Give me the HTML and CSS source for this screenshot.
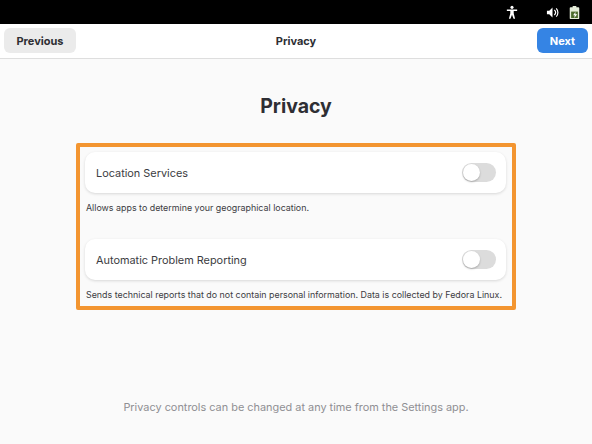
FILE: index.html
```html
<!DOCTYPE html>
<html lang="en">
<head>
<meta charset="utf-8">
<title>Privacy</title>
<link rel="stylesheet" href="styles.css">
</head>
<body>
<div class="topbar">
  <svg class="ic ic-a11y" viewBox="0 0 14 16"><circle cx="7" cy="2" r="1.8" fill="#fff"/><path d="M1 4.600h12v1.600H9v3l1.600 6.200H8.800L7 10.600 5.200 15.400H3.400L5 9.200v-3H1z" fill="#fff"/></svg>
  <svg class="ic ic-vol" viewBox="0 0 14 14"><path d="M1 5h2.500L7 1.500v11L3.500 9H1z" fill="#fff"/><path d="M9 4.200a4 4 0 0 1 0 5.600M11 2.500a6.500 6.500 0 0 1 0 9" fill="none" stroke="#fff" stroke-width="1.300"/></svg>
  <svg class="ic ic-bat" viewBox="0 0 12 16"><path d="M4 .8h4v1.400h2.200c.6 0 1 .4 1 1v11c0 .6-.4 1-1 1H1.800c-.6 0-1-.4-1-1v-11c0-.6.4-1 1-1H4z" fill="#e4ecd8"/><path d="M2.300 7h7.400v7H2.300z" fill="#4c6b2c"/><path d="M7 7.500 4.500 11h1.800l-.6 3L9 10H7z" fill="#fff"/></svg>
</div>
<header class="header">
  <div class="header-start"><button class="btn btn-prev">Previous</button></div>
  <div class="header-title">Privacy</div>
  <div class="header-end"><button class="btn btn-next">Next</button></div>
</header>
<main class="main">
  <h1 class="title">Privacy</h1>
  <section class="box">
    <div class="row">
      <span class="row-label">Location Services</span>
      <span class="switch"><span class="knob"></span></span>
    </div>
    <p class="note">Allows apps to determine your geographical location.</p>
    <div class="row row-second">
      <span class="row-label">Automatic Problem Reporting</span>
      <span class="switch"><span class="knob"></span></span>
    </div>
    <p class="note">Sends technical reports that do not contain personal information. Data is collected by Fedora Linux.</p>
  </section>
  <p class="footer">Privacy controls can be changed at any time from the Settings app.</p>
</main>
</body>
</html>
```
FILE: styles.css
```css
* { box-sizing: border-box; }
html, body { margin: 0; height: 100%; }
body {
  width: 592px;
  height: 444px;
  overflow: hidden;
  background: #fafafa;
  font-family: Inter, "Liberation Sans", sans-serif;
  color: #2e2e33;
  display: flex;
  flex-direction: column;
}
.topbar {
  height: 24px;
  flex: none;
  background: #000;
  display: flex;
  align-items: center;
  justify-content: flex-end;
  padding-right: 12px;
}
.ic { display: block; flex: none; }
.ic-a11y { width: 12px; height: 15px; margin-right: 28px; }
.ic-vol { width: 13px; height: 13px; margin-right: 10px; }
.ic-bat { width: 11px; height: 15px; }
.header {
  height: 35px;
  flex: none;
  background: #fff;
  border-bottom: 1px solid #dedede;
  display: grid;
  grid-template-columns: 1fr auto 1fr;
  align-items: center;
  padding: 4px 4px 5px 4px;
}
.header-end { display: flex; justify-content: flex-end; }
.btn {
  display: block;
  height: 25px;
  border: 0;
  border-radius: 6px;
  font-family: inherit;
  font-size: 11px;
  font-weight: 700;
  padding: 0;
}
.btn-prev { width: 72px; background: #ebebeb; color: #2e2e33; }
.btn-next { width: 51px; background: #3584e4; color: #fff; }
.header-title { font-size: 11px; font-weight: 700; color: #2e2e33; }
.main {
  flex: 1;
  display: flex;
  flex-direction: column;
  align-items: center;
}
.title {
  margin: 35px 0 0;
  height: 24px;
  line-height: 24px;
  font-size: 19.500px;
  font-weight: 700;
  color: #2e2e33;
}
.box {
  margin-top: 25px;
  width: 440px;
  height: 167px;
  border: 4px solid #f39530;
  border-radius: 2px;
  padding: 5px 6px 0 5px;
}
.row {
  height: 41px;
  background: #fff;
  border-radius: 10px;
  box-shadow: 0 1px 3px rgba(0,0,0,.14);
  display: flex;
  align-items: center;
  justify-content: space-between;
  padding: 0 10px 0 11px;
}
.row-second { margin-top: 25px; }
.row-label { font-size: 10.900px; color: #3c3c42; }
.switch {
  width: 34px;
  height: 19px;
  border-radius: 10px;
  background: #dcdcdc;
  display: block;
  padding: 1px;
}
.knob {
  display: block;
  width: 17px;
  height: 17px;
  border-radius: 50%;
  background: #fff;
  box-shadow: 0 1px 2px rgba(0,0,0,.25);
}
.note {
  margin: 9px 0 0 1px;
  height: 12px;
  line-height: 12px;
  font-size: 8.900px;
  color: #3c3c42;
  white-space: nowrap;
}
.footer {
  margin: 91px 0 0;
  font-size: 10.900px;
  line-height: 13px;
  color: #8f8f93;
}
```
